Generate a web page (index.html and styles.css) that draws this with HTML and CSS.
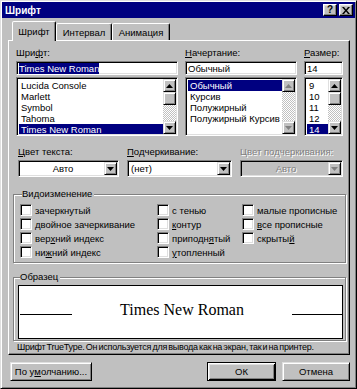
FILE: index.html
```html
<!DOCTYPE html>
<html lang="ru">
<head>
<meta charset="utf-8">
<title>Шрифт</title>
<link rel="stylesheet" href="styles.css">
</head>
<body>
<div class="window">
  <div class="titlebar">
    <span class="title">Шрифт</span>
    <div class="tb-btns">
      <span class="tb-btn q">?</span>
      <span class="tb-btn"><svg width="8" height="7" viewBox="0 0 8 7"><path d="M0 0h2l2 2.5L6 0h2L5 3.5 8 7H6L4 4.5 2 7H0l3-3.5z" fill="#000"/></svg></span>
    </div>
  </div>

  <div class="tabs">
    <div class="tab active t1">Шрифт</div>
    <div class="tab t2">Интервал</div>
    <div class="tab t3">Анимация</div>
  </div>

  <div class="panel">
    <div class="toprow">
      <div class="c1">
        <span class="lbl">Шри<u>ф</u>т:</span>
        <div class="edit"><span class="sel">Times New Roman</span></div>
        <div class="list">
          <div class="items">
            <div>Lucida Console</div>
            <div>Marlett</div>
            <div>Symbol</div>
            <div>Tahoma</div>
            <div class="hl">Times New Roman</div>
          </div>
          <div class="vscroll">
            <div class="sbtn"><svg width="7" height="4" viewBox="0 0 7 4"><polygon points="3.5,0 7,4 0,4" fill="#000"/></svg></div>
            <div class="thumb"></div>
            <div class="track"></div>
            <div class="sbtn"><svg width="7" height="4" viewBox="0 0 7 4"><polygon points="0,0 7,0 3.5,4" fill="#000"/></svg></div>
          </div>
        </div>
      </div>

      <div class="c2">
        <span class="lbl"><u>Н</u>ачертание:</span>
        <div class="edit">Обычный</div>
        <div class="list">
          <div class="items">
            <div class="hl">Обычный</div>
            <div>Курсив</div>
            <div>Полужирный</div>
            <div>Полужирный Курсив</div>
          </div>
          <div class="vscroll">
            <div class="sbtn"><svg width="7" height="4" viewBox="0 0 7 4"><polygon points="3.5,0 7,4 0,4" fill="#808080"/></svg></div>
            <div class="track"></div>
            <div class="sbtn"><svg width="7" height="4" viewBox="0 0 7 4"><polygon points="0,0 7,0 3.5,4" fill="#808080"/></svg></div>
          </div>
        </div>
      </div>

      <div class="c3">
        <span class="lbl"><u>Р</u>азмер:</span>
        <div class="edit">14</div>
        <div class="list">
          <div class="items">
            <div>9</div>
            <div>10</div>
            <div>11</div>
            <div>12</div>
            <div class="hl">14</div>
          </div>
          <div class="vscroll">
            <div class="sbtn"><svg width="7" height="4" viewBox="0 0 7 4"><polygon points="3.5,0 7,4 0,4" fill="#000"/></svg></div>
            <div class="thumb"></div>
            <div class="track"></div>
            <div class="sbtn"><svg width="7" height="4" viewBox="0 0 7 4"><polygon points="0,0 7,0 3.5,4" fill="#000"/></svg></div>
          </div>
        </div>
      </div>
    </div>

    <div class="row2">
      <div>
        <span class="lbl"><u>Ц</u>вет текста:</span>
        <div class="combo">
          <span class="val center">Авто</span>
          <span class="dbtn"><svg width="7" height="4" viewBox="0 0 7 4"><polygon points="0,0 7,0 3.5,4" fill="#000"/></svg></span>
        </div>
      </div>
      <div>
        <span class="lbl"><u>П</u>одчеркивание:</span>
        <div class="combo">
          <span class="val">(нет)</span>
          <span class="dbtn"><svg width="7" height="4" viewBox="0 0 7 4"><polygon points="0,0 7,0 3.5,4" fill="#000"/></svg></span>
        </div>
      </div>
      <div>
        <span class="lbl dis">Цвет подчеркивания:</span>
        <div class="combo disabled">
          <span class="val center">Авто</span>
          <span class="dbtn"><svg width="7" height="4" viewBox="0 0 7 4"><polygon points="0,0 7,0 3.5,4" fill="#808080"/></svg></span>
        </div>
      </div>
    </div>

    <div class="group g1">
      <span class="glabel">Видоизменение</span>
      <div class="checks">
        <div class="chk"><span class="box"></span><span>зачеркнутый</span></div>
        <div class="chk"><span class="box"></span><span><u>д</u>войное зачеркивание</span></div>
        <div class="chk"><span class="box"></span><span>вер<u>х</u>ний индекс</span></div>
        <div class="chk"><span class="box"></span><span>ни<u>ж</u>ний индекс</span></div>
        <div class="chk"><span class="box"></span><span>с тенью</span></div>
        <div class="chk"><span class="box"></span><span><u>к</u>онтур</span></div>
        <div class="chk"><span class="box"></span><span>приподн<u>я</u>тый</span></div>
        <div class="chk"><span class="box"></span><span><u>у</u>топленный</span></div>
        <div class="chk"><span class="box"></span><span>малые прописные</span></div>
        <div class="chk"><span class="box"></span><span><u>в</u>се прописные</span></div>
        <div class="chk"><span class="box"></span><span>скрыты<u>й</u></span></div>
      </div>
    </div>

    <div class="group g2">
      <span class="glabel">Образец</span>
      <div class="preview">
        <span class="pline l"></span>
        <span class="ptext">Times New Roman</span>
        <span class="pline r"></span>
      </div>
    </div>

    <div class="desc">Шрифт TrueType. Он используется для вывода как на экран, так и на принтер.</div>
  </div>

  <div class="buttons">
    <div class="btn b1">По у<u>м</u>олчанию...</div>
    <div class="btn-group">
      <div class="btn default b2">ОК</div>
      <div class="btn b3">Отмена</div>
    </div>
  </div>
</div>
</body>
</html>
```

FILE: styles.css
```css
* { box-sizing: border-box; }

body {
  margin: 0;
  background: #c0c0c0;
  font-family: "Liberation Sans", Arial, sans-serif;
  font-size: 9.5px;
  color: #000;
}

u { text-decoration: underline; text-underline-offset: 1px; }

.window {
  width: 357px;
  height: 389px;
  border: 1px solid;
  border-color: #dfdfdf #000 #000 #dfdfdf;
  box-shadow: inset 1px 1px #fff, inset -1px -1px #808080;
  padding: 1px;
  background: #c0c0c0;
}

.titlebar {
  height: 16px;
  background: #000080;
  display: flex;
  align-items: center;
  justify-content: space-between;
  padding: 0 2px 0 3px;
}

.title { color: #fff; font-weight: bold; font-size: 10px; }

.tb-btns { display: flex; gap: 2px; }

.tb-btn {
  width: 14px;
  height: 12px;
  background: #c0c0c0;
  border: 1px solid;
  border-color: #fff #000 #000 #fff;
  box-shadow: inset -1px -1px #808080, inset 1px 1px #dfdfdf;
  display: flex;
  align-items: center;
  justify-content: center;
}

.tb-btn.q {
  font-weight: bold;
  font-size: 10px;
  line-height: 10px;
}

/* Tabs */
.tabs {
  display: flex;
  align-items: flex-end;
  height: 19px;
  margin-top: 3px;
  padding-left: 10px;
  position: relative;
  z-index: 1;
}

.tab {
  height: 17px;
  border: 1px solid;
  border-bottom: none;
  border-color: #fff #000 transparent #fff;
  box-shadow: inset -1px 0 #808080;
  border-radius: 2px 2px 0 0;
  display: flex;
  align-items: center;
  justify-content: center;
  background: #c0c0c0;
}

.tab.active { height: 20px; margin-bottom: -1px; }
.t1 { width: 44px; }
.t2 { width: 56px; }
.t3 { width: 58px; }

/* Panel */
.panel {
  height: 315px;
  margin: 0 5px 0 6px;
  border: 1px solid;
  border-color: #fff #000 #000 #fff;
  box-shadow: inset -1px -1px #808080;
  padding: 5px 6px 0 7px;
}

.toprow { display: flex; justify-content: space-between; }
.c1 { width: 162px; }
.c2 { width: 112px; }
.c3 { width: 39px; }

.lbl {
  display: block;
  height: 13px;
  line-height: 13px;
  margin-bottom: 2px;
  white-space: nowrap;
}

.lbl.dis { color: #808080; text-shadow: 1px 1px #fff; }

.edit, .list, .combo {
  border: 1px solid;
  border-color: #808080 #fff #fff #808080;
  box-shadow: inset 1px 1px #000, inset -1px -1px #dfdfdf;
}

.edit {
  height: 14px;
  background: #fff;
  padding: 1px 2px 0 2px;
  line-height: 11px;
  white-space: nowrap;
  overflow: hidden;
}

.sel { background: #000080; color: #fff; }

.list {
  margin-top: 2px;
  height: 59px;
  background: #fff;
  display: flex;
  padding: 1px;
}

.items { flex: 1; overflow: hidden; padding: 1px 0 0 1px; }
.items div {
  height: 11px;
  line-height: 11px;
  padding-left: 2px;
  white-space: nowrap;
}

.hl { background: #000080; color: #fff; }

.vscroll {
  width: 13px;
  display: flex;
  flex-direction: column;
  background-color: #fff;
  background-image: repeating-conic-gradient(#c0c0c0 0 25%, #fff 0 50%);
  background-size: 2px 2px;
}

.sbtn, .thumb, .dbtn, .btn {
  background: #c0c0c0;
  border: 1px solid;
  border-color: #dfdfdf #000 #000 #dfdfdf;
  box-shadow: inset 1px 1px #fff, inset -1px -1px #808080;
}

.sbtn {
  height: 13px;
  display: flex;
  align-items: center;
  justify-content: center;
  flex: none;
}

.thumb { height: 13px; flex: none; }
.track { flex: 1; }

/* Row 2 */
.row2 {
  display: grid;
  grid-template-columns: 101px 105px 103px;
  column-gap: 8px;
  margin: 9px 0 0 2px;
}

.combo {
  height: 17px;
  background: #fff;
  display: flex;
  padding: 1px;
}

.combo .val {
  flex: 1;
  line-height: 13px;
  padding-left: 2px;
  white-space: nowrap;
}

.combo .val.center { text-align: center; }

.dbtn {
  width: 13px;
  display: flex;
  align-items: center;
  justify-content: center;
}

.combo.disabled { background: #c0c0c0; }
.combo.disabled .val { color: #808080; text-shadow: 1px 1px #fff; }

/* Groups */
.group {
  border: 1px solid #808080;
  box-shadow: inset 1px 1px #fff, 1px 1px #fff;
  margin-left: -3px;
  margin-right: -3px;
}

.glabel {
  display: table;
  height: 12px;
  line-height: 12px;
  margin: -7px 0 0 2px;
  padding: 0 2px 0 0;
  background: #c0c0c0;
}

.g1 { margin-top: 17px; padding: 0 0 3px 6px; }

.checks {
  display: grid;
  grid-auto-flow: column;
  grid-template-rows: repeat(4, 14px);
  grid-template-columns: 137px 85px 1fr;
  margin-top: 3px;
}

.chk { display: flex; align-items: center; gap: 3px; white-space: nowrap; }

.box {
  width: 12px;
  height: 12px;
  background: #fff;
  border: 1px solid;
  border-color: #808080 #fff #fff #808080;
  box-shadow: inset 1px 1px #000, inset -1px -1px #dfdfdf;
  flex: none;
}

.g2 { margin-top: 14px; padding: 0 2px 1px 4px; }

.preview {
  margin-top: 2px;
  height: 54px;
  background: #fff;
  border: 1px solid #000;
  display: flex;
  align-items: baseline;
  justify-content: space-between;
  padding: 15px 0 0 1px;
}

.ptext {
  font-family: "Liberation Serif", "Times New Roman", serif;
  font-size: 16px;
}

.pline { display: block; height: 1px; background: #000; }
.pline.l { width: 52px; }
.pline.r { width: 50px; }

.desc {
  margin-top: 1px;
  line-height: 11px;
  padding-left: 1px;
  white-space: nowrap;
  font-size: 9px;
  letter-spacing: -0.25px;
  word-spacing: -1px;
}

/* Buttons */
.buttons {
  display: flex;
  justify-content: space-between;
  margin-top: 7px;
  padding: 0 5px 0 8px;
}

.btn-group { display: flex; gap: 6px; }

.btn {
  height: 19px;
  display: flex;
  align-items: center;
  justify-content: center;
  white-space: nowrap;
}

.btn.default {
  border-color: #000;
  box-shadow: inset 1px 1px #fff, inset -1px -1px #000, inset 2px 2px #dfdfdf, inset -2px -2px #808080;
}

.b1 { width: 82px; }
.b2 { width: 69px; }
.b3 { width: 68px; }
```
